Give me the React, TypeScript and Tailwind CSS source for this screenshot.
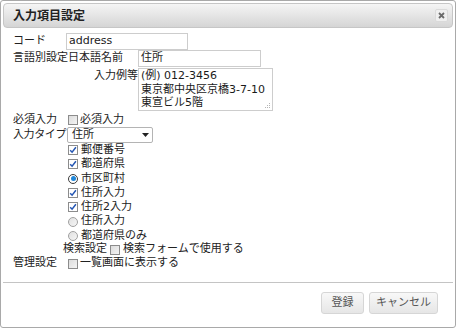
import React from 'react';

const font = "font-['DejaVu_Sans','Noto_Sans_CJK_JP',sans-serif]";

function CheckBox({ checked = false }: { checked?: boolean }) {
  return (
    <span
      className={`relative inline-block w-[10px] h-[10px] shrink-0 border border-[#8c8c8c] ${
        checked ? 'bg-white' : 'bg-gradient-to-br from-[#dcdcdc] to-[#f4f4f4]'
      }`}
    >
      {checked && (
        <svg viewBox="0 0 8 8" className="absolute inset-0 w-[8px] h-[8px]">
          <path d="M1.2 4.2 L3.1 6.2 L6.9 1.2" fill="none" stroke="#2456b3" strokeWidth="1.5" />
        </svg>
      )}
    </span>
  );
}

function Radio({ checked = false }: { checked?: boolean }) {
  return (
    <span
      className={`flex items-center justify-center w-[10px] h-[10px] shrink-0 rounded-full border ${
        checked ? 'border-[#3a3a3a] bg-white' : 'border-[#a0a0a0] bg-gradient-to-br from-[#e0e0e0] to-[#f6f6f6]'
      }`}
    >
      {checked && <span className="w-[5px] h-[5px] rounded-full bg-[#1f86d8]" />}
    </span>
  );
}

const options: { label: string; type: 'check' | 'radio'; checked: boolean }[] = [
  { label: '郵便番号', type: 'check', checked: true },
  { label: '都道府県', type: 'check', checked: true },
  { label: '市区町村', type: 'radio', checked: true },
  { label: '住所入力', type: 'check', checked: true },
  { label: '住所2入力', type: 'check', checked: true },
  { label: '住所入力', type: 'radio', checked: false },
  { label: '都道府県のみ', type: 'radio', checked: false },
];

export default function App() {
  return (
    <div
      className={`w-[456px] h-[328px] bg-white border border-[#a9a9a9] rounded-[3px] p-[2px] flex flex-col text-[11px] text-[#222] whitespace-nowrap ${font}`}
    >
      <div className="h-[25px] shrink-0 flex items-center justify-between border border-[#c6c6c6] rounded-[4px] bg-gradient-to-b from-[#f5f5f5] to-[#d5d5d5] pl-[9px] pr-[4px]">
        <span className="font-bold text-[12px] text-[#222]">入力項目設定</span>
        <span className="w-[13px] h-[13px] flex items-center justify-center bg-[#efefef] border border-[#dadada] rounded-[2px]">
          <svg viewBox="0 0 7 7" className="w-[7px] h-[7px]">
            <path d="M1 1 L6 6 M6 1 L1 6" stroke="#6a6a6a" strokeWidth="1.8" />
          </svg>
        </span>
      </div>

      <div className="h-[254px] shrink-0 flex flex-col pl-[10px] pt-[5px]">
        <div className="h-[17px] flex items-center">
          <span className="w-[53px] shrink-0">コード</span>
          <div className="w-[122px] h-[17px] border border-[#cdcdcd] flex items-center pl-[2px] text-[#1a1a1a]">
            address
          </div>
        </div>
        <div className="h-[17px] flex items-center">
          <span className="w-[125px] shrink-0">言語別設定日本語名前</span>
          <div className="w-[123px] h-[17px] border border-[#cdcdcd] flex items-center pl-[2px] text-[#1a1a1a]">
            住所
          </div>
        </div>
        <div className="mt-[1px] h-[43px] flex items-start">
          <span className="w-[125px] shrink-0 text-right leading-[14px] pt-[1px]">入力例等</span>
          <div className="relative w-[135px] h-[43px] border border-[#cdcdcd] px-[2px] leading-[13.5px] whitespace-pre text-[#1a1a1a]">
            {'(例) 012-3456\n東京都中央区京橋3-7-10\n東宣ビル5階'}
            <svg viewBox="0 0 6 6" className="absolute right-[1px] bottom-[1px] w-[6px] h-[6px]">
              <rect x="4" y="0" width="1" height="1" fill="#b5b5b5" />
              <rect x="2" y="2" width="1" height="1" fill="#b5b5b5" />
              <rect x="4" y="2" width="1" height="1" fill="#b5b5b5" />
              <rect x="0" y="4" width="1" height="1" fill="#b5b5b5" />
              <rect x="2" y="4" width="1" height="1" fill="#b5b5b5" />
              <rect x="4" y="4" width="1" height="1" fill="#b5b5b5" />
            </svg>
          </div>
        </div>
        <div className="mt-[2px] h-[14px] flex items-center">
          <span className="w-[55px] shrink-0">必須入力</span>
          <CheckBox />
          <span className="ml-[2px]">必須入力</span>
        </div>
        <div className="h-[16px] flex items-center">
          <span className="w-[54px] shrink-0 tracking-[-0.4px]">入力タイプ</span>
          <div className="w-[86px] h-[16px] border border-[#b4b4b4] rounded-[2px] flex items-center justify-between pl-[4px] pr-[3px]">
            <span>住所</span>
            <svg viewBox="0 0 7 4" className="w-[7px] h-[4px]">
              <path d="M0 0 H7 L3.5 4 Z" fill="#222" />
            </svg>
          </div>
        </div>
        <div className="flex flex-col pl-[55px]">
          {options.map((o, i) => (
            <div key={i} className="h-[14.3px] flex items-center">
              {o.type === 'check' ? <CheckBox checked={o.checked} /> : <Radio checked={o.checked} />}
              <span className="ml-[3px]">{o.label}</span>
            </div>
          ))}
        </div>
        <div className="h-[13px] flex items-center pl-[50px]">
          <span className="w-[47px] shrink-0">検索設定</span>
          <CheckBox />
          <span className="ml-[3px]">検索フォームで使用する</span>
        </div>
        <div className="h-[15px] flex items-center">
          <span className="w-[55px] shrink-0">管理設定</span>
          <CheckBox />
          <span className="ml-[2px]">一覧画面に表示する</span>
        </div>
      </div>

      <div className="flex-1 border-t border-[#c4c4c4] flex justify-end items-start pt-[9px] pr-[15px] gap-[5px]">
        <button className="w-[43px] h-[22px] border border-[#d6d6d6] rounded-[3px] bg-gradient-to-b from-[#f8f8f8] to-[#e6e6e6] text-[#555] text-[11px]">
          登録
        </button>
        <button className="w-[69px] h-[22px] border border-[#d6d6d6] rounded-[3px] bg-gradient-to-b from-[#f8f8f8] to-[#e6e6e6] text-[#555] text-[11px]">
          キャンセル
        </button>
      </div>
    </div>
  );
}
